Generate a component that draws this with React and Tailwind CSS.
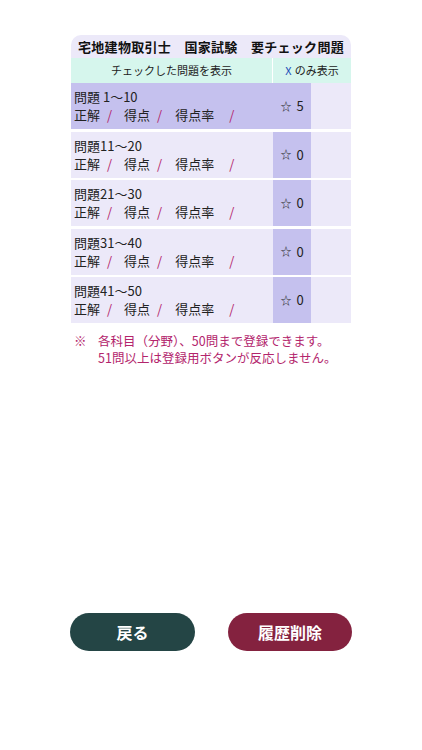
import React from 'react';

const ROWS = [
  { label: '問題 1〜10', stars: 5, active: true },
  { label: '問題11〜20', stars: 0 },
  { label: '問題21〜30', stars: 0 },
  { label: '問題31〜40', stars: 0 },
  { label: '問題41〜50', stars: 0 },
];

const FONT = { fontFamily: '"Noto Sans CJK JP", "Noto Sans", sans-serif' };

function Slash() {
  return <span className="text-[#b3246c]">/</span>;
}

export default function App() {
  return (
    <div className="w-[422px] h-[750px] bg-white flex flex-col" style={FONT}>
      <div className="mt-[35px] mx-[71px] w-[280px]">
        {/* title */}
        <div className="h-[23px] bg-[#ece9f9] rounded-t-[10px] flex items-center justify-center text-[13px] font-bold text-[#111] tracking-[0.3px]">
          宅地建物取引士　国家試験　要チェック問題
        </div>

        {/* filter bar */}
        <div className="h-[25px] flex bg-[#d6f6ed] text-[11px] text-[#222]">
          <div className="w-[202px] flex items-center justify-center border-r border-white">
            チェックした問題を表示
          </div>
          <div className="flex-1 flex items-center justify-center">
            <span className="text-[#1d4fb8] mr-[3px]">X</span>のみ表示
          </div>
        </div>

        {/* rows */}
        <div className="flex flex-col gap-[2.5px]">
          {ROWS.map((r, i) => (
            <div key={i} className="h-[46px] flex">
              <div
                className={`w-[202px] flex flex-col justify-center pl-[3px] text-[13px] leading-[18px] text-[#222] ${
                  r.active ? 'bg-[#c5c1ee]' : 'bg-[#ece9f9]'
                }`}
              >
                <div>{r.label}</div>
                <div className="flex">
                  <span className="w-[33px]">正解</span>
                  <Slash />
                  <span className="ml-[12px] w-[33px]">得点</span>
                  <Slash />
                  <span className="ml-[13px] w-[54px]">得点率</span>
                  <Slash />
                </div>
              </div>
              <div className="w-[38px] bg-[#c5c1ee] flex items-center justify-center text-[13px] text-[#222]">
                <span className="text-[11px] mr-[5px]">☆</span>
                {r.stars}
              </div>
              <div className="flex-1 bg-[#ece9f9]" />
            </div>
          ))}
        </div>

        {/* note */}
        <div className="mt-[9px] text-[12.5px] leading-[17px] text-[#b3246c] flex">
          <span className="w-[27px] pl-[3px]">※</span>
          <div>
            <div>各科目（分野）、50問まで登録できます。</div>
            <div>51問以上は登録用ボタンが反応しません。</div>
          </div>
        </div>
      </div>

      <div className="mt-auto mb-[99px] mx-[70px] flex justify-between">
        <button className="w-[125px] h-[38px] rounded-full bg-[#244545] text-white text-[16px] font-bold">
          戻る
        </button>
        <button className="w-[124px] h-[38px] rounded-full bg-[#84223f] text-white text-[16px] font-bold">
          履歴削除
        </button>
      </div>
    </div>
  );
}
